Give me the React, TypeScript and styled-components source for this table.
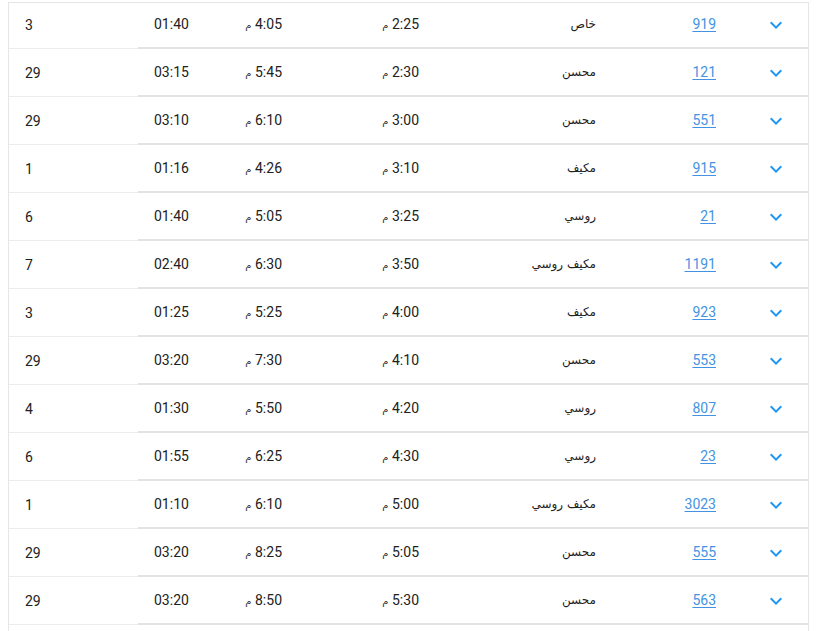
import React from "react";
import styled, { createGlobalStyle } from "styled-components";

const Global = createGlobalStyle`
  html, body { margin: 0; padding: 0; background: #fff; }
  body { font-family: Roboto, "DejaVu Sans", "Noto Sans", sans-serif; overflow: hidden; }
`;

const Page = styled.div`
  padding: 2px 11px 0 8px;
`;

const Table = styled.div`
  width: 801px;
  border-top: 1px solid #e6e6e6;
  border-left: 1px solid #e6e6e6;
  border-right: 1px solid #e6e6e6;
  box-sizing: border-box;
  padding-bottom: 12px;
`;

const Row = styled.div`
  display: grid;
  grid-template-columns: 129px 75px 92px 137px 177px 121px 68px;
  height: 48px;
  &:first-child { height: 46px; }
  &:first-child > * { padding-bottom: 2px; }
`;

const Cell = styled.div<{ $align: "left" | "right" | "center"; $pl?: number; $pr?: number; $light?: boolean }>`
  display: flex;
  align-items: center;
  justify-content: ${(p) => (p.$align === "left" ? "flex-start" : p.$align === "right" ? "flex-end" : "center")};
  padding-left: ${(p) => p.$pl ?? 0}px;
  padding-right: ${(p) => p.$pr ?? 0}px;
  box-sizing: border-box;
  border-bottom: ${(p) => (p.$light ? "1px solid #ececec" : "2px solid #e3e3e3")};
  font-size: 14px;
  color: #212121;
  white-space: nowrap;
`;

const Time = styled.span`
  direction: rtl;
  unicode-bidi: isolate;
`;

const Meridiem = styled.span`
  font-size: 10px;
  font-family: "DejaVu Sans", sans-serif;
  color: #333;
`;

const Arabic = styled.span`
  direction: rtl;
  font-family: "DejaVu Sans", "Noto Sans", sans-serif;
  font-size: 12px;
  color: #222;
`;

const Link = styled.a`
  color: #4493e2;
  text-decoration: underline;
  text-underline-offset: 2px;
  font-size: 14px;
  cursor: pointer;
`;

const ExpandButton = styled.span`
  display: inline-flex;
  width: 24px;
  height: 24px;
  margin-top: 2px;
`;

const Chevron = () => (
  <ExpandButton>
    <svg width="24" height="24" viewBox="0 0 24 24">
      <path d="M16.59 8.59L12 13.17 7.41 8.59 6 10l6 6 6-6z" fill="#2196f3" />
    </svg>
  </ExpandButton>
);

type Trip = { count: number; dur: string; arr: string; dep: string; type: string; num: string };

const trips: Trip[] = [
  { count: 3, dur: "01:40", arr: "4:05", dep: "2:25", type: "خاص", num: "919" },
  { count: 29, dur: "03:15", arr: "5:45", dep: "2:30", type: "محسن", num: "121" },
  { count: 29, dur: "03:10", arr: "6:10", dep: "3:00", type: "محسن", num: "551" },
  { count: 1, dur: "01:16", arr: "4:26", dep: "3:10", type: "مكيف", num: "915" },
  { count: 6, dur: "01:40", arr: "5:05", dep: "3:25", type: "روسي", num: "21" },
  { count: 7, dur: "02:40", arr: "6:30", dep: "3:50", type: "مكيف روسي", num: "1191" },
  { count: 3, dur: "01:25", arr: "5:25", dep: "4:00", type: "مكيف", num: "923" },
  { count: 29, dur: "03:20", arr: "7:30", dep: "4:10", type: "محسن", num: "553" },
  { count: 4, dur: "01:30", arr: "5:50", dep: "4:20", type: "روسي", num: "807" },
  { count: 6, dur: "01:55", arr: "6:25", dep: "4:30", type: "روسي", num: "23" },
  { count: 1, dur: "01:10", arr: "6:10", dep: "5:00", type: "مكيف روسي", num: "3023" },
  { count: 29, dur: "03:20", arr: "8:25", dep: "5:05", type: "محسن", num: "555" },
  { count: 29, dur: "03:20", arr: "8:50", dep: "5:30", type: "محسن", num: "563" },
];

const TimeText = ({ t }: { t: string }) => (
  <Time>
    {t} <Meridiem>م</Meridiem>
  </Time>
);

export default function App() {
  return (
    <>
      <Global />
      <Page>
        <Table>
          {trips.map((r, i) => (
            <Row key={i}>
              <Cell $align="left" $pl={16} $light>{r.count}</Cell>
              <Cell $align="left" $pl={16}>{r.dur}</Cell>
              <Cell $align="right" $pr={23}><TimeText t={r.arr} /></Cell>
              <Cell $align="right" $pr={23}><TimeText t={r.dep} /></Cell>
              <Cell $align="right" $pr={23}><Arabic>{r.type}</Arabic></Cell>
              <Cell $align="right" $pr={24}><Link>{r.num}</Link></Cell>
              <Cell $align="left" $pl={24}><Chevron /></Cell>
            </Row>
          ))}
        </Table>
      </Page>
    </>
  );
}
